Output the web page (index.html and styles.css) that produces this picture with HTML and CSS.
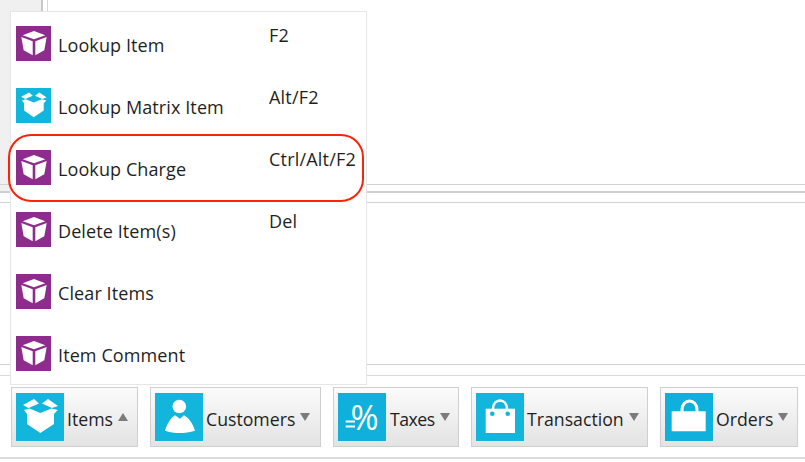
FILE: index.html
```html
<!DOCTYPE html>
<html lang="en">
<head>
<meta charset="utf-8">
<title>Items menu</title>
<link rel="stylesheet" href="styles.css">
</head>
<body>
<svg class="defs" width="0" height="0" aria-hidden="true">
  <symbol id="cube" viewBox="0 0 35 35">
    <path fill="#fff" d="M18 5 29.300 9.300 18 13.300 6.700 9.300Z"/>
    <path fill="#fff" d="M5.300 11 16.700 15.300V29.300L7.700 24.300Z"/>
    <path fill="#fff" d="M30.700 11 19.300 15.300V29.300L28.300 24.300Z"/>
  </symbol>
  <symbol id="openbox" viewBox="0 0 48 48">
    <path fill="#fff" d="M7 12 18 6 23 10.500 12.500 15Z"/>
    <path fill="#fff" d="M26 10.500 32 6 42 13 36 15Z"/>
    <path fill="#fff" d="M8 17 13.500 15.500 24.300 20 35.500 15.500 41.700 17 38 21V31L24.300 40 11 31V21Z"/>
  </symbol>
  <symbol id="person" viewBox="0 0 48 48">
    <circle fill="#fff" cx="24.300" cy="13.500" r="6.800"/>
    <path fill="#fff" d="M20 22.300 25 25.700 29 22.300C34 25 38 31 40 37.700 30 40.800 19 40.800 10 37.700 12 31 15.500 25 20 22.300Z"/>
  </symbol>
  <symbol id="bag" viewBox="0 0 48 48">
    <path fill="none" stroke="#fff" stroke-width="2.500" d="M17 16C17 4.500 31 4.500 31 16"/>
    <path fill="#fff" d="M9.700 15.700H39V40H9.700Z"/>
    <circle fill="#12b5dc" cx="16.300" cy="20.700" r="2.300"/>
    <circle fill="#12b5dc" cx="31.700" cy="20.700" r="2.300"/>
  </symbol>
  <symbol id="bag2" viewBox="0 0 48 48">
    <path fill="none" stroke="#fff" stroke-width="3" d="M17 19V17C17 5 32 5 32 17V19"/>
    <path fill="#fff" d="M6.700 18.300H40.700V38.300H6.700Z"/>
  </symbol>
</svg>

<main class="window">
  <section class="top-pane">
    <div class="side-strip"></div>
    <div class="gutter"></div>
    <div class="top-content"></div>
  </section>
  <div class="splitter"></div>
  <section class="mid-pane"></section>
  <div class="foot-gap"></div>
  <nav class="toolbar">
    <button class="tool tool-items"><svg class="tool-icon"><use href="#openbox"/></svg><span class="tool-label">Items</span><span class="arrow arrow-up"></span></button>
    <button class="tool tool-customers"><svg class="tool-icon"><use href="#person"/></svg><span class="tool-label">Customers</span><span class="arrow"></span></button>
    <button class="tool tool-taxes"><svg class="tool-icon tool-icon-dark" viewBox="0 0 48 48"><text class="pct" x="26.600" y="36.700" text-anchor="middle">%</text><path fill="#fff" d="M7.700 27.500H17V29.500H7.700ZM7.700 32.500H17V34.500H7.700Z"/></svg><span class="tool-label">Taxes</span><span class="arrow"></span></button>
    <button class="tool tool-transaction"><svg class="tool-icon"><use href="#bag"/></svg><span class="tool-label">Transaction</span><span class="arrow"></span></button>
    <button class="tool tool-orders"><svg class="tool-icon tool-icon-dark"><use href="#bag2"/></svg><span class="tool-label">Orders</span><span class="arrow"></span></button>
  </nav>
</main>

<ul class="menu">
  <li class="menu-row"><svg class="menu-icon purple"><use href="#cube"/></svg><span class="menu-label">Lookup Item</span><span class="shortcut">F2</span></li>
  <li class="menu-row"><svg class="menu-icon blue"><use href="#openbox"/></svg><span class="menu-label">Lookup Matrix Item</span><span class="shortcut">Alt/F2</span></li>
  <li class="menu-row"><svg class="menu-icon purple"><use href="#cube"/></svg><span class="menu-label">Lookup Charge</span><span class="shortcut">Ctrl/Alt/F2</span></li>
  <li class="menu-row"><svg class="menu-icon purple"><use href="#cube"/></svg><span class="menu-label">Delete Item(s)</span><span class="shortcut">Del</span></li>
  <li class="menu-row"><svg class="menu-icon purple"><use href="#cube"/></svg><span class="menu-label">Clear Items</span></li>
  <li class="menu-row"><svg class="menu-icon purple"><use href="#cube"/></svg><span class="menu-label">Item Comment</span></li>
</ul>
<div class="highlight"></div>
</body>
</html>
```

FILE: styles.css
```css
* { box-sizing: border-box; }
html, body { margin: 0; padding: 0; }
body {
  width: 805px;
  height: 462px;
  overflow: hidden;
  position: relative;
  background: #fff;
  font-family: "Open Sans", "Noto Sans", sans-serif;
  color: #1f1f1f;
}
.defs { position: absolute; }
.pct { font: 500 34px "Open Sans", sans-serif; fill: #fff; }

.window { display: flex; flex-direction: column; height: 462px; }

.top-pane { display: flex; height: 184px; flex: none; }
.side-strip { width: 41px; background: #f0f0f0; }
.gutter { width: 7px; border-left: 2px solid #c9c9c9; border-right: 1px solid #d9d9d9; background: #fff; }
.top-content { flex: 1; }

.splitter {
  height: 19px;
  flex: none;
  border-top: 1px solid #d2d2d2;
  border-bottom: 1px solid #d2d2d2;
  background:
    linear-gradient(#f0f0f0, #f0f0f0) 0 0 / 41px 6px no-repeat,
    linear-gradient(#fff 6px, #cfcfcf 6px, #cfcfcf 8px, #fff 8px);
}
.mid-pane { height: 162px; flex: none; background: #fff; border-bottom: 1px solid #d2d2d2; }
.foot-gap { height: 11px; flex: none; border-bottom: 1px solid #d9d9d9; }

.toolbar {
  flex: none;
  display: flex;
  gap: 12px;
  height: 86px;
  padding: 11px 0 0 11px;
  position: relative;
}
.toolbar::after {
  content: "";
  position: absolute;
  left: 0;
  right: 0;
  top: 81px;
  border-top: 2px solid #dcdcdc;
}
.tool {
  height: 60px;
  padding: 5px 0 0 4px;
  display: flex;
  align-items: flex-start;
  border: 1px solid #cfcfcf;
  background: linear-gradient(#fbfbfb, #e3e3e3);
  font: inherit;
  color: #1f1f1f;
  text-align: left;
}
.tool-items { width: 127px; }
.tool-customers { width: 171px; }
.tool-taxes { width: 126px; }
.tool-transaction { width: 177px; }
.tool-orders { width: 138px; }
.tool-icon { width: 48px; height: 48px; flex: none; background: #12b5dc; }
.tool-icon-dark { background: #0fb0dc; }
.tool-label { font-size: 17.7px; line-height: 24px; margin: 14px 0 0 3px; white-space: nowrap; }
.tool-taxes .tool-label { letter-spacing: -0.5px; margin-left: 4px; }
.arrow {
  width: 0;
  height: 0;
  margin: 20px 0 0 5px;
  border-left: 5px solid transparent;
  border-right: 5px solid transparent;
  border-top: 8px solid #7b7b7b;
}
.arrow-up { border-top: 0; border-bottom: 8px solid #7b7b7b; }

.menu {
  position: absolute;
  left: 10px;
  top: 11px;
  width: 357px;
  height: 374px;
  margin: 0;
  padding: 0;
  list-style: none;
  background: #fff;
  border: 1px solid #e6e6e6;
}
.menu-row { position: relative; height: 62px; display: flex; align-items: flex-start; padding: 14px 0 0 5px; }
.menu-icon { width: 35px; height: 35px; flex: none; }
.purple { background: #8e2c8e; }
.blue { background: #12b5dc; }
.menu-label { font-size: 18px; letter-spacing: 0.1px; line-height: 24px; margin: 7px 0 0 7px; white-space: nowrap; }
.shortcut { position: absolute; left: 258px; top: 11px; font-size: 18px; letter-spacing: 0.2px; line-height: 24px; white-space: nowrap; }

.highlight {
  position: absolute;
  left: 8px;
  top: 134px;
  width: 356px;
  height: 68px;
  border: 2px solid #fa2408;
  border-radius: 23px;
}
```
